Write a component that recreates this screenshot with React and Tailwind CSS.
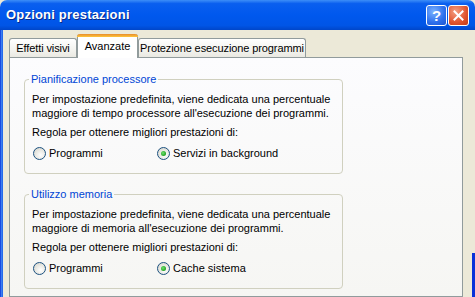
import { useState } from "react";

function Radio({ checked, label, onClick, className = "" }) {
	return (
		<label onClick={onClick} className={"flex items-center cursor-default " + className}>
			<span className="ml-[1px] w-[13px] h-[13px] rounded-full border border-[#1c5180] bg-[radial-gradient(circle_at_60%_65%,#ffffff,#e6e6e0_55%,#d0d0c8)] flex items-center justify-center">
				{checked && (
					<span className="w-[5px] h-[5px] rounded-full bg-[radial-gradient(circle_at_40%_40%,#6fe26f,#21a121_70%)]" />
				)}
			</span>
			<span className="ml-[3px]">{label}</span>
		</label>
	);
}

function Group({ title, text, options }) {
	const [value, setValue] = useState(1);
	return (
		<fieldset className="ml-[14px] w-[319px] border border-[#d0d0bf] rounded-[4px] px-[7px] pb-[13px]">
			<legend className="-ml-[3px] px-[2px] leading-[14px] text-[#0046d5]">{title}</legend>
			<div className="mt-[6px] leading-[14px]">
				{text[0]}
				<br />
				{text[1]}
			</div>
			<div className="mt-[5px] leading-[14px]">Regola per ottenere migliori prestazioni di:</div>
			<div className="mt-[7px] flex leading-[14px]">
				<Radio className="w-[124px]" checked={value === 0} label={options[0]} onClick={() => setValue(0)} />
				<Radio checked={value === 1} label={options[1]} onClick={() => setValue(1)} />
			</div>
		</fieldset>
	);
}

export default function App() {
	const [tab, setTab] = useState(1);
	const tabs = [
		{ name: "Effetti visivi", w: "w-[68px]" },
		{ name: "Avanzate", w: "w-[61px]" },
		{ name: "Protezione esecuzione programmi", w: "w-[168px]" },
	];

	return (
		<div className="w-[475px] h-[297px] overflow-hidden bg-[#ece9d8] text-[11px] text-black font-['Liberation_Sans',Arial,sans-serif] flex flex-col">
			{/* title bar */}
			<div className="h-[30px] shrink-0 rounded-t-[7px] bg-[linear-gradient(to_bottom,#3d8ef8_0%,#0a5fef_12%,#0058ee_50%,#0055e6_85%,#0046c9_100%)] flex items-center pl-[6px] pr-[6px]">
				<span className="text-white font-bold text-[13px] tracking-[0.2px] [text-shadow:1px_1px_0_#0a2a8a]">
					Opzioni prestazioni
				</span>
				<div className="ml-auto flex gap-[1px]">
					<div className="w-[21px] h-[21px] rounded-[3px] border border-white bg-[radial-gradient(circle_at_35%_30%,#7ab2ff,#2d6fec_60%,#1d55d0)] flex items-center justify-center text-white font-bold text-[15px] leading-none">
						?
					</div>
					<div className="w-[21px] h-[21px] rounded-[3px] border border-white bg-[radial-gradient(circle_at_35%_30%,#f4a083,#e0542e_60%,#c23a16)] flex items-center justify-center">
						<svg width="11" height="11" viewBox="0 0 11 11">
							<path d="M1.5 1.5 L9.5 9.5 M9.5 1.5 L1.5 9.5" stroke="white" strokeWidth="2" strokeLinecap="square" />
						</svg>
					</div>
				</div>
			</div>

			<div className="flex flex-1 min-h-0">
				<div className="w-[3px] shrink-0 bg-[linear-gradient(to_right,#0831d9,#3c7ef0,#1960e8)]" />
				<div className="flex-1 pl-[6px] flex flex-col">
					{/* tabs */}
					<div className="h-[27px] shrink-0 flex items-end relative z-10 whitespace-nowrap">
						{tabs.map((t, i) =>
							i === tab ? (
								<div
									key={t.name}
									className={t.w + " h-[24px] -mb-[1px] bg-white border-x border-[#919b9c] rounded-t-[3px] flex flex-col"}
								>
									<div className="h-[3px] -mx-[1px] rounded-t-[3px] bg-[linear-gradient(to_bottom,#e68b2c,#ffc73c)]" />
									<div className="flex-1 flex items-center justify-center pb-[3px]">{t.name}</div>
								</div>
							) : (
								<div
									key={t.name}
									onClick={() => setTab(i)}
									className={t.w + " h-[19px] bg-[linear-gradient(to_bottom,#ffffff,#f3f3ef_60%,#eae9e2)] border border-b-0 border-[#919b9c] rounded-t-[3px] flex items-center justify-center tracking-[-0.1px]"}
								>
									{t.name}
								</div>
							)
						)}
					</div>

					{/* panel */}
					<div className="w-[454px] flex-1 border border-[#919b9c] bg-[linear-gradient(to_bottom,#fcfcfe,#f6f6f3)] pt-[14px] flex flex-col gap-[13px]">
						<Group
							title="Pianificazione processore"
							text={[
								"Per impostazione predefinita, viene dedicata una percentuale",
								"maggiore di tempo processore all'esecuzione dei programmi.",
							]}
							options={["Programmi", "Servizi in background"]}
						/>
						<Group
							title="Utilizzo memoria"
							text={[
								"Per impostazione predefinita, viene dedicata una percentuale",
								"maggiore di memoria all'esecuzione dei programmi.",
							]}
							options={["Programmi", "Cache sistema"]}
						/>
					</div>
				</div>
				<div className="w-[3px] shrink-0 flex flex-col">
					<div className="h-[223px] bg-[#ece9d8]" />
					<div className="flex-1 bg-[#0831d9]" />
				</div>
			</div>
		</div>
	);
}
